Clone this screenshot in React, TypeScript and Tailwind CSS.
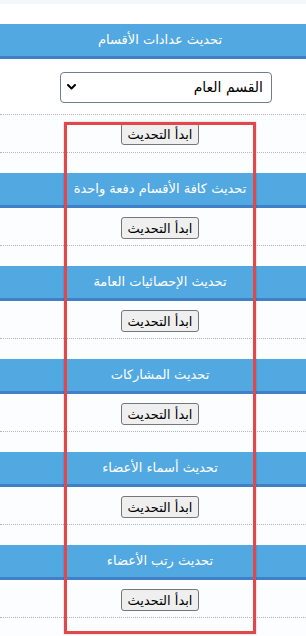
import React from "react"

const sections = [
  "تحديث كافة الأقسام دفعة واحدة",
  "تحديث الإحصائيات العامة",
  "تحديث المشاركات",
  "تحديث أسماء الأعضاء",
  "تحديث رتب الأعضاء",
]

function SectionHeader({ title }: { title: string }) {
  return (
    <div className="h-8 bg-[#52a8e0] border-b-[3px] border-[#3f80c6] box-content flex items-center justify-center text-white text-[13px]">
      {title}
    </div>
  )
}

function StartButton() {
  return (
    <button className="h-[22px] px-[6px] bg-[#efefef] border border-[#767676] rounded-[3px] text-[13px] text-black leading-none">
      ابدأ التحديث
    </button>
  )
}

export default function App() {
  return (
    <div className="relative w-[306px] h-[636px] overflow-hidden bg-[#fcfdfe]" style={{ fontFamily: '"DejaVu Sans", sans-serif' }}>
      <div className="w-[320px]" dir="rtl">
        <div className="h-[4px] bg-[#f4f7f9]" />
        <div className="h-[20px] bg-white" />

        <div className="mb-[20px]">
          <SectionHeader title="تحديث عدادات الأقسام" />
          <div className="pt-[13px] pb-[11px] border-b border-dotted border-[#b5b5b5] bg-white" dir="ltr">
            <div className="relative ml-[60px] w-[212px]">
              <select
                dir="rtl"
                className="appearance-none w-full h-[31px] rounded-[4px] border border-[#6f7d8c] bg-white pr-[8px] pl-6 text-[14px] text-black"
                defaultValue="general"
              >
                <option value="general">القسم العام</option>
              </select>
              <svg className="absolute left-[7px] top-[12px] pointer-events-none" width="9" height="6" viewBox="0 0 9 6">
                <path d="M1 1 L4.5 4.5 L8 1" fill="none" stroke="#000" strokeWidth="2" strokeLinecap="round" strokeLinejoin="round" />
              </svg>
            </div>
          </div>
          <div className="pt-[8px] pb-[7px] border-b border-dotted border-[#b5b5b5] flex justify-center">
            <StartButton />
          </div>
        </div>

        {sections.map((title) => (
          <div key={title} className="mb-[20px]">
            <SectionHeader title={title} />
            <div className="pt-[9px] pb-[6px] border-b border-dotted border-[#b5b5b5] flex justify-center">
              <StartButton />
            </div>
          </div>
        ))}
      </div>

      <div className="absolute left-[64px] top-[122px] w-[192px] h-[512px] border-[3px] border-[#e2474a] shadow-[0_0_2px_rgba(0,0,0,0.25)] pointer-events-none" />
    </div>
  )
}
